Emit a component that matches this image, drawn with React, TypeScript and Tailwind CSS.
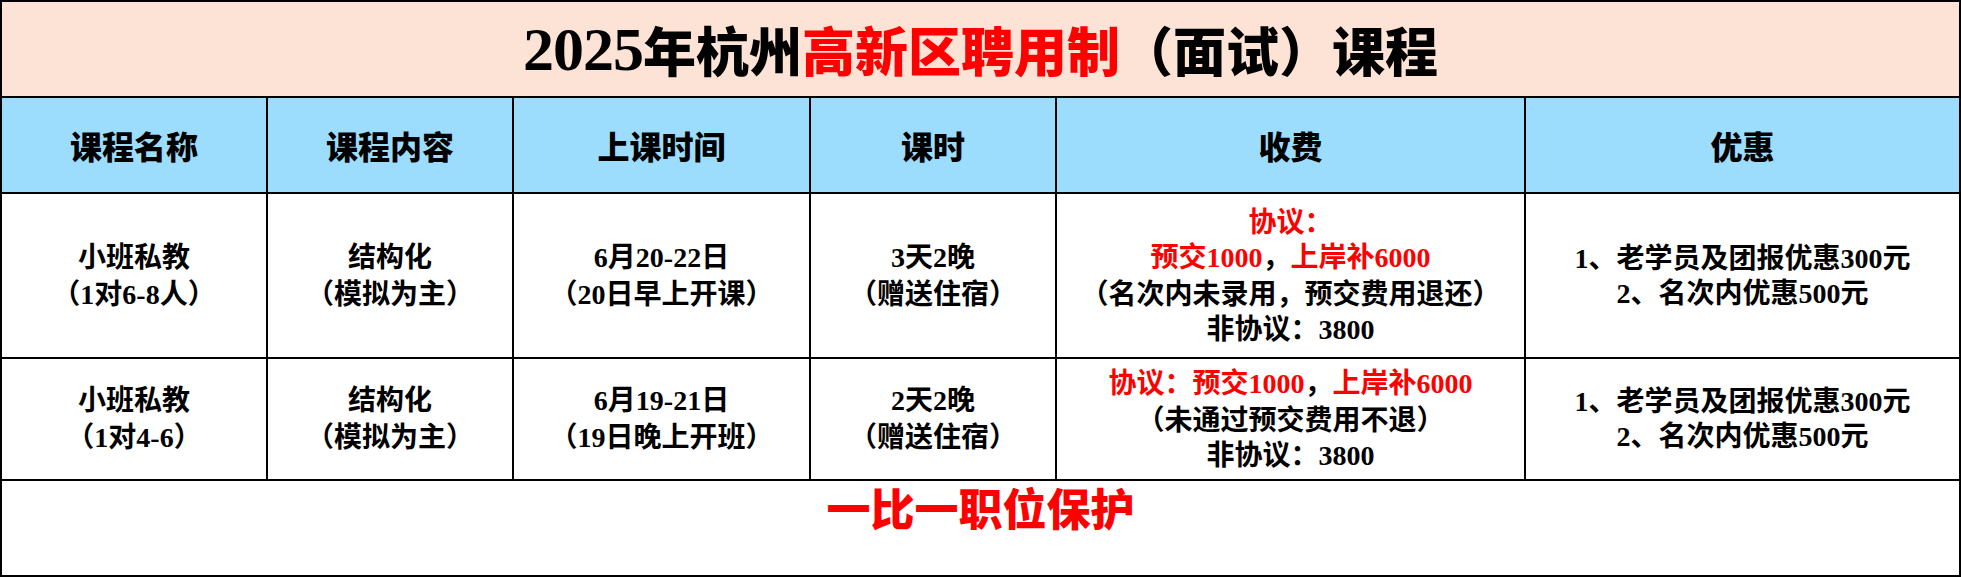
import React from "react";

const body = "font-['Liberation_Serif','Noto_Sans_CJK_SC',serif] font-bold text-[28px] leading-[35px] text-black";

function Cell({ children, className = "" }: { children: React.ReactNode; className?: string }) {
  return (
    <div className={`bg-white flex flex-col items-center justify-center text-center whitespace-nowrap ${body} ${className}`}>
      {children}
    </div>
  );
}

function Head({ children }: { children: React.ReactNode }) {
  return (
    <div className="bg-[#9cdcfc] flex items-center justify-center font-['Noto_Sans_CJK_SC',serif] font-black text-[32px] leading-none text-black">
      {children}
    </div>
  );
}

const R = ({ children }: { children: React.ReactNode }) => <span className="text-[#ff0000]">{children}</span>;
const O = () => <span className="inline-block w-[28px] text-right font-['Noto_Sans_CJK_SC',serif]">（</span>;
const C = () => <span className="inline-block w-[28px] text-left font-['Noto_Sans_CJK_SC',serif]">）</span>;

function Par({ children }: { children: React.ReactNode }) {
  return (
    <div>
      <O />
      {children}
      <C />
    </div>
  );
}

export default function App() {
  return (
    <div className="w-[1961px] h-[577px] bg-white">
      <div className="grid grid-cols-[264px_244px_295px_244px_467px_433px] grid-rows-[94px_94px_163px_120px_94px] gap-[2px] p-[2px] bg-black w-[1961px] h-[577px]">
        <div className="col-span-6 bg-[#fce3d5] flex items-center justify-center whitespace-nowrap font-['Noto_Sans_CJK_SC',serif] font-black text-[53px] leading-none text-black">
          <span className="font-['Liberation_Serif',serif] text-[62px] font-bold tracking-[-1px]">2025</span>
          <span>年杭州</span>
          <span className="text-[#ff0000]">高新区聘用制</span>
          <span>（面试）课程</span>
        </div>

        <Head>课程名称</Head>
        <Head>课程内容</Head>
        <Head>上课时间</Head>
        <Head>课时</Head>
        <Head>收费</Head>
        <Head>优惠</Head>

        <Cell>
          <div>小班私教</div>
          <Par>1对6-8人</Par>
        </Cell>
        <Cell>
          <div>结构化</div>
          <Par>模拟为主</Par>
        </Cell>
        <Cell>
          <div>6月20-22日</div>
          <Par>20日早上开课</Par>
        </Cell>
        <Cell>
          <div>3天2晚</div>
          <Par>赠送住宿</Par>
        </Cell>
        <Cell>
          <div><R>协议：</R></div>
          <div><R>预交1000</R>，<R>上岸补6000</R></div>
          <Par>名次内未录用，预交费用退还</Par>
          <div>非协议：3800</div>
        </Cell>
        <Cell>
          <div>1、老学员及团报优惠300元</div>
          <div>2、名次内优惠500元</div>
        </Cell>

        <Cell>
          <div>小班私教</div>
          <Par>1对4-6</Par>
        </Cell>
        <Cell>
          <div>结构化</div>
          <Par>模拟为主</Par>
        </Cell>
        <Cell>
          <div>6月19-21日</div>
          <Par>19日晚上开班</Par>
        </Cell>
        <Cell>
          <div>2天2晚</div>
          <Par>赠送住宿</Par>
        </Cell>
        <Cell>
          <div><R>协议：预交1000</R>，<R>上岸补6000</R></div>
          <Par>未通过预交费用不退</Par>
          <div>非协议：3800</div>
        </Cell>
        <Cell>
          <div>1、老学员及团报优惠300元</div>
          <div>2、名次内优惠500元</div>
        </Cell>

        <div className="col-span-6 bg-white flex justify-center pt-[4px] font-['Noto_Sans_CJK_SC',serif] font-black text-[44px] leading-none text-[#ff0000] whitespace-nowrap">
          一比一职位保护
        </div>
      </div>
    </div>
  );
}
